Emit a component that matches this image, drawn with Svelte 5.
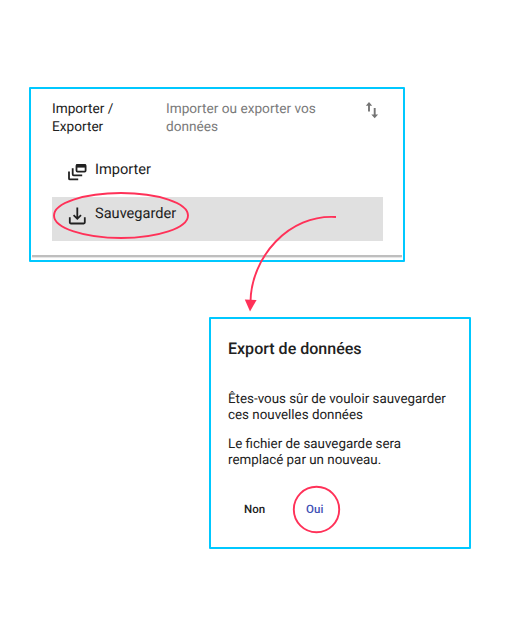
<script>
  const actions = [
    { id: 'import', label: 'Importer', active: false },
    { id: 'save', label: 'Sauvegarder', active: true }
  ];
</script>

<main>
  <section class="panel settings">
    <header>
      <h2>Importer / Exporter</h2>
      <p>Importer ou exporter vos données</p>
      <svg class="swap" width="14" height="18" viewBox="0 0 14 18" aria-hidden="true">
        <path class="stem" d="M4 10.5V3M9.7 7v7.5" />
        <path class="tip" d="M.8 4.8L4 1l3.2 3.8zM6.3 13.4L9.7 17.2l3.4-3.8z" />
      </svg>
    </header>
    <ul>
      {#each actions as action (action.id)}
        <li class:active={action.active}>
          {#if action.id === 'import'}
            <svg width="20" height="20" viewBox="0 0 20 20" aria-hidden="true">
              <rect class="line" x="9.5" y="2.8" width="9.1" height="6.8" rx="1" />
              <path class="bar" d="M9 2.4h10v3.2H9z" />
              <path class="line" d="M5.7 6.2v6.1q0 1 1 1h8.5M2 9.4v7q0 1 1 1h8.2" />
            </svg>
          {:else}
            <svg width="20" height="20" viewBox="0 0 20 20" aria-hidden="true">
              <path class="line" d="M2.8 11.3v5.3q0 .9 1 .9h13q1 0 1-.9v-5.3M10.3 1.6v11M6.6 9.2l3.7 3.6 3.7-3.6" />
            </svg>
          {/if}
          <span>{action.label}</span>
        </li>
      {/each}
    </ul>
    <div class="edge"></div>
  </section>

  <section class="panel dialog">
    <h1>Export de données</h1>
    <p>Êtes-vous sûr de vouloir sauvegarder<br />ces nouvelles données</p>
    <p>Le fichier de sauvegarde sera<br />remplacé par un nouveau.</p>
    <div class="buttons">
      <button>Non</button>
      <button class="yes">Oui</button>
    </div>
  </section>

  <svg class="marks" width="521" height="636" viewBox="0 0 521 636" aria-hidden="true">
    <ellipse cx="121" cy="215.5" rx="67" ry="22.5" />
    <circle cx="316.5" cy="509.5" r="22.7" />
    <path d="M336 217C289 214 251 257 250.5 302" />
    <path class="head" d="M244.8 299.5L256.6 300L250 311.5z" />
  </svg>
</main>

<style>
  :global(body) {
    margin: 0;
    background: #fff;
  }
  main {
    position: relative;
    box-sizing: border-box;
    width: 521px;
    height: 636px;
    padding: 87px 0 0 29px;
    font-family: Roboto, sans-serif;
    text-rendering: geometricPrecision;
    color: #212121;
  }
  h1, h2, p, ul {
    margin: 0;
    padding: 0;
    font-weight: 400;
  }
  .panel {
    box-sizing: border-box;
    border: 2px solid #00c8ff;
    border-radius: 1px;
    background: #fff;
  }
  .settings {
    display: flex;
    flex-direction: column;
    width: 376px;
    height: 175px;
  }
  header {
    display: flex;
    height: 61px;
    padding: 11px 0 0 21px;
    box-sizing: border-box;
  }
  header h2, header p {
    font-size: 13.65px;
    line-height: 18px;
  }
  header h2 {
    width: 70px;
    margin-right: 44px;
  }
  header p {
    width: 170px;
    color: #7a7a7a;
  }
  .swap {
    margin: 1px 0 0 29px;
    fill: none;
    stroke: #757575;
    stroke-width: 1.9;
  }
  .tip {
    fill: #757575;
    stroke: none;
  }
  ul {
    list-style: none;
    padding: 0 20px 0 21px;
  }
  li {
    display: flex;
    height: 44px;
    width: 331px;
    margin-top: 3px;
    padding-left: 15px;
    box-sizing: border-box;
  }
  li + li {
    margin-top: 0;
  }
  li svg {
    margin: 9px 8px 0 0;
  }
  li span {
    font-size: 14.6px;
    line-height: 33px;
  }
  .active {
    background: #e0e0e0;
  }
  .line {
    fill: none;
    stroke: currentColor;
    stroke-width: 1.8;
  }
  .bar {
    fill: currentColor;
  }
  .edge {
    height: 2px;
    margin: 14px 1px 0;
    background: #bebebe;
    box-shadow: 0 1px 1px #e4e4e4;
  }
  .dialog {
    width: 262px;
    height: 232px;
    margin: 55px 0 0 180px;
    padding: 19px 17px 0;
  }
  h1 {
    font-size: 16.05px;
    line-height: 21px;
    font-weight: 500;
    margin-bottom: 33px;
  }
  .dialog p {
    font-size: 13.36px;
    line-height: 16px;
    margin-bottom: 13px;
    white-space: nowrap;
  }
  .buttons {
    display: flex;
    padding: 19px 0 0 16px;
    gap: 41px;
  }
  button {
    border: 0;
    padding: 0;
    background: none;
    color: #212121;
    font: 500 11.5px/16px Roboto, sans-serif;
    text-rendering: geometricPrecision;
  }
  .yes {
    color: #3f51b5;
  }
  .marks {
    position: absolute;
    inset: 0;
    fill: none;
    stroke: #ff3158;
    stroke-width: 1.9;
    pointer-events: none;
  }
  .head {
    fill: #ff3158;
    stroke: none;
  }
</style>
